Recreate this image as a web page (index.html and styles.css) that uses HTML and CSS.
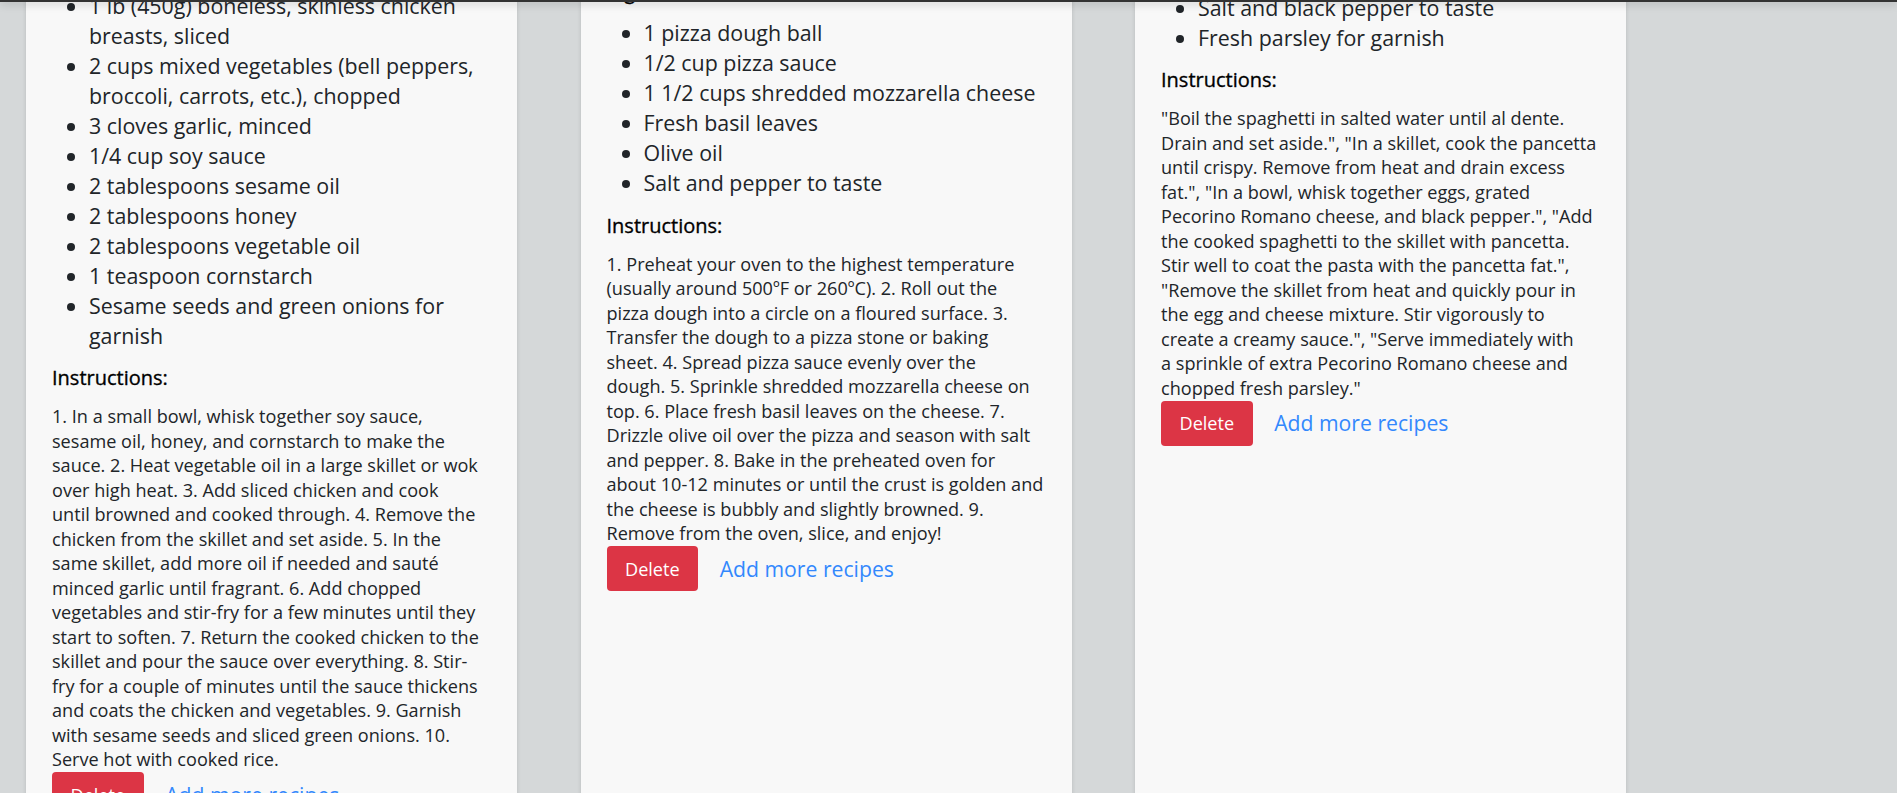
FILE: index.html
```html
<!DOCTYPE html>
<html lang="en">
<head>
<meta charset="utf-8">
<title>Recipes</title>
<link rel="stylesheet" href="styles.css">
</head>
<body>
<header class="topbar"></header>
<main class="recipes">
  <article class="card card--stirfry">
    <h5 class="card-heading">Ingredients:</h5>
    <ul class="ingredients">
      <li>1 lb (450g) boneless, skinless chicken breasts, sliced</li>
      <li>2 cups mixed vegetables (bell peppers, broccoli, carrots, etc.), chopped</li>
      <li>3 cloves garlic, minced</li>
      <li>1/4 cup soy sauce</li>
      <li>2 tablespoons sesame oil</li>
      <li>2 tablespoons honey</li>
      <li>2 tablespoons vegetable oil</li>
      <li>1 teaspoon cornstarch</li>
      <li>Sesame seeds and green onions for garnish</li>
    </ul>
    <h5 class="card-heading">Instructions:</h5>
    <p class="instructions">1. In a small bowl, whisk together soy sauce,<br>sesame oil, honey, and cornstarch to make the<br>sauce. 2. Heat vegetable oil in a large skillet or wok<br>over high heat. 3. Add sliced chicken and cook<br>until browned and cooked through. 4. Remove the<br>chicken from the skillet and set aside. 5. In the<br>same skillet, add more oil if needed and sauté<br>minced garlic until fragrant. 6. Add chopped<br>vegetables and stir-fry for a few minutes until they<br>start to soften. 7. Return the cooked chicken to the<br>skillet and pour the sauce over everything. 8. Stir-<br>fry for a couple of minutes until the sauce thickens<br>and coats the chicken and vegetables. 9. Garnish<br>with sesame seeds and sliced green onions. 10.<br>Serve hot with cooked rice.</p>
    <div class="actions">
      <button class="btn-delete" type="button">Delete</button>
      <a class="add-link" href="#">Add more recipes</a>
    </div>
  </article>

  <article class="card card--pizza">
    <h5 class="card-heading">Ingredients:</h5>
    <ul class="ingredients">
      <li>1 pizza dough ball</li>
      <li>1/2 cup pizza sauce</li>
      <li>1 1/2 cups shredded mozzarella cheese</li>
      <li>Fresh basil leaves</li>
      <li>Olive oil</li>
      <li>Salt and pepper to taste</li>
    </ul>
    <h5 class="card-heading">Instructions:</h5>
    <p class="instructions">1. Preheat your oven to the highest temperature<br>(usually around 500ºF or 260ºC). 2. Roll out the<br>pizza dough into a circle on a floured surface. 3.<br>Transfer the dough to a pizza stone or baking<br>sheet. 4. Spread pizza sauce evenly over the<br>dough. 5. Sprinkle shredded mozzarella cheese on<br>top. 6. Place fresh basil leaves on the cheese. 7.<br>Drizzle olive oil over the pizza and season with salt<br>and pepper. 8. Bake in the preheated oven for<br>about 10-12 minutes or until the crust is golden and<br>the cheese is bubbly and slightly browned. 9.<br>Remove from the oven, slice, and enjoy!</p>
    <div class="actions">
      <button class="btn-delete" type="button">Delete</button>
      <a class="add-link" href="#">Add more recipes</a>
    </div>
  </article>

  <article class="card card--carbonara">
    <h5 class="card-heading">Ingredients:</h5>
    <ul class="ingredients">
      <li>400g spaghetti</li>
      <li>150g pancetta, diced</li>
      <li>3 large eggs</li>
      <li>50g grated Pecorino Romano cheese</li>
      <li>Salt and black pepper to taste</li>
      <li>Fresh parsley for garnish</li>
    </ul>
    <h5 class="card-heading">Instructions:</h5>
    <p class="instructions">&quot;Boil the spaghetti in salted water until al dente.<br>Drain and set aside.&quot;, &quot;In a skillet, cook the pancetta<br>until crispy. Remove from heat and drain excess<br>fat.&quot;, &quot;In a bowl, whisk together eggs, grated<br>Pecorino Romano cheese, and black pepper.&quot;, &quot;Add<br>the cooked spaghetti to the skillet with pancetta.<br>Stir well to coat the pasta with the pancetta fat.&quot;,<br>&quot;Remove the skillet from heat and quickly pour in<br>the egg and cheese mixture. Stir vigorously to<br>create a creamy sauce.&quot;, &quot;Serve immediately with<br>a sprinkle of extra Pecorino Romano cheese and<br>chopped fresh parsley.&quot;</p>
    <div class="actions">
      <button class="btn-delete" type="button">Delete</button>
      <a class="add-link" href="#">Add more recipes</a>
    </div>
  </article>
</main>
</body>
</html>
```
FILE: styles.css
```css
html, body {
  margin: 0;
  padding: 0;
}

body {
  background: #d5d8d9;
  font-family: "Open Sans", "Liberation Sans", sans-serif;
  color: #212529;
  overflow: hidden;
  height: 793px;
}

.topbar {
  position: fixed;
  top: 0;
  left: 0;
  right: 0;
  height: 2px;
  background: #333;
  box-shadow: 0 1px 8px rgba(0, 0, 0, 0.4);
  z-index: 10;
}

.recipes {
  display: grid;
  grid-template-columns: repeat(3, 491px);
  column-gap: 63.5px;
  align-items: stretch;
  padding-left: 26px;
  margin-top: -200px;
}

.card {
  background: #f8f8f8;
  box-shadow: 0 0 4px rgba(0, 0, 0, 0.14);
  padding: 0 26px 40px 26px;
  min-height: 1100px;
}

.card--stirfry { padding-top: 152.8px; }
.card--pizza { padding-top: 180.1px; }
.card--carbonara { padding-top: 34.5px; }

.card-heading {
  margin: 0 0 14px 0;
  font-size: 20px;
  line-height: 24px;
  font-weight: 400;
  color: #000;
  -webkit-text-stroke: 0.35px #000;
}

.ingredients {
  margin: 0 0 15.5px 0;
  padding-left: 37px;
  font-size: 21.4px;
  line-height: 30px;
}

.instructions {
  margin: 0 0 0.5px 0;
  font-size: 18.1px;
  line-height: 24.5px;
  white-space: nowrap;
}

.actions {
  display: flex;
  align-items: center;
  gap: 21.5px;
}

.btn-delete {
  font-family: inherit;
  font-size: 18.1px;
  line-height: 26px;
  padding: 9.5px 18.5px;
  border: none;
  border-radius: 4px;
  background: #dc3545;
  color: #fff;
  cursor: pointer;
}

.add-link {
  font-size: 21.2px;
  line-height: 30px;
  color: #3388fd;
  text-decoration: none;
}
```
